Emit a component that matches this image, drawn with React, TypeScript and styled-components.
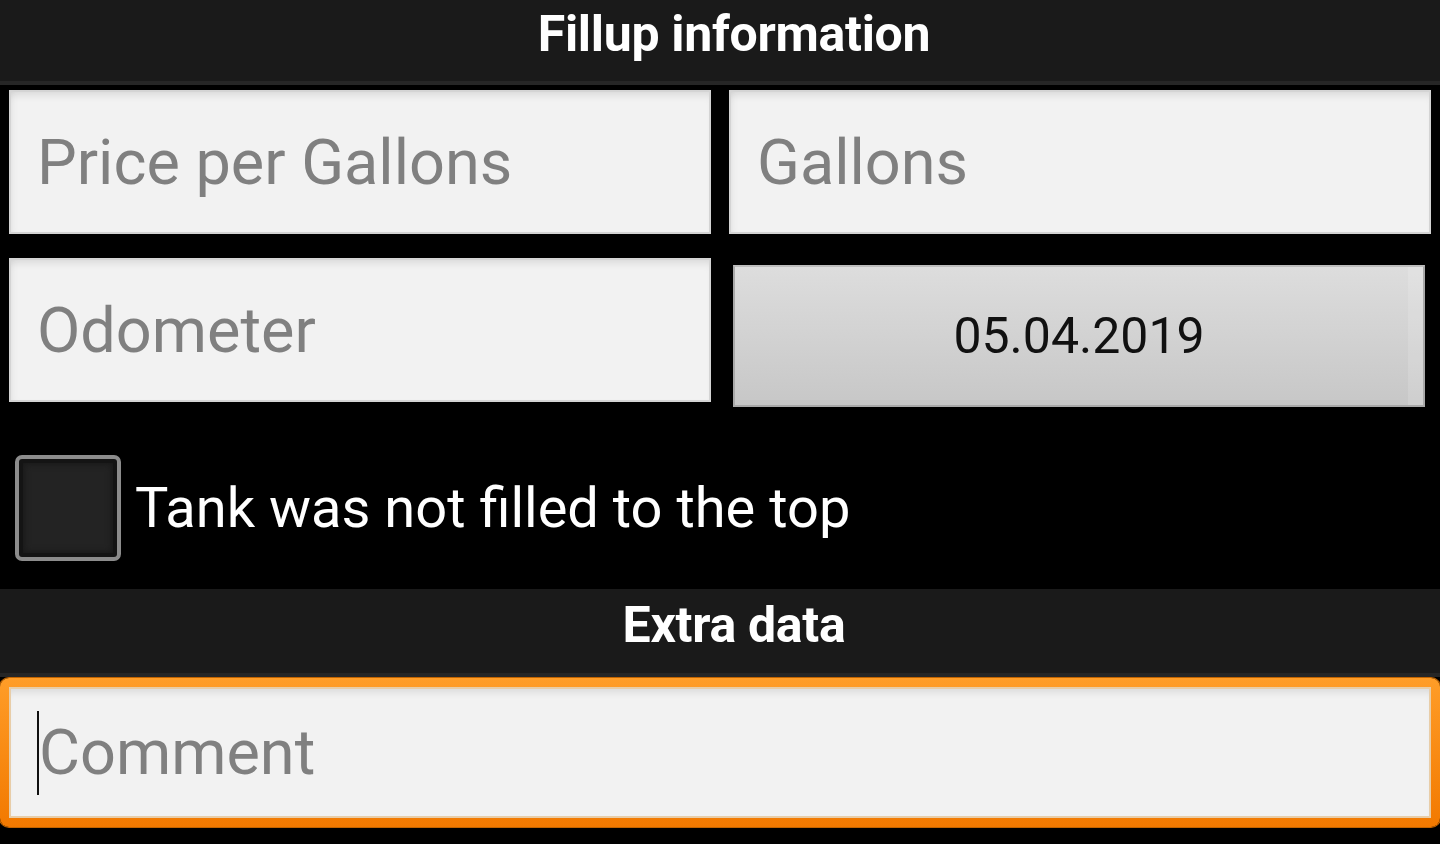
import React from "react";
import styled, { createGlobalStyle } from "styled-components";

const GlobalStyle = createGlobalStyle`
  html, body {
    margin: 0;
    padding: 0;
    background: #000;
  }
  body {
    font-family: Roboto, "Noto Sans", "Liberation Sans", sans-serif;
    width: 1440px;
    height: 844px;
    overflow: hidden;
  }
`;

const Screen = styled.div`
  display: flex;
  flex-direction: column;
  width: 1440px;
  height: 844px;
  background: #000;
`;

const SectionHeader = styled.div<{ $height: number; $lift: number }>`
  box-sizing: border-box;
  display: flex;
  align-items: center;
  justify-content: center;
  height: ${(p) => p.$height}px;
  padding: 0 0 ${(p) => p.$lift}px 28px;
  background: #1a1a1a;
  border-bottom: 4px solid #262626;
  color: #fff;
  font-weight: 700;
  font-size: 50px;
  letter-spacing: -0.3px;
  flex-shrink: 0;
`;

const FieldGrid = styled.div`
  display: grid;
  grid-template-columns: 702px 702px;
  column-gap: 18px;
  row-gap: 24px;
  padding: 5px 9px 0;
`;

const Field = styled.input`
  box-sizing: border-box;
  width: 100%;
  height: 144px;
  margin: 0;
  padding: 0 0 0 26px;
  border: 2px solid #d4d4d4;
  background: #f2f2f2;
  box-shadow: inset 0 8px 10px -6px rgba(0, 0, 0, 0.12),
    inset 6px 0 8px -6px rgba(0, 0, 0, 0.08);
  font-family: Roboto, "Noto Sans", sans-serif;
  font-size: 63px;
  color: #222;
  outline: none;
  &::placeholder {
    color: #808080;
  }
`;

const DateButton = styled.button`
  box-sizing: border-box;
  height: 142px;
  margin: 7px 6px -5px 4px;
  border: 2px solid #a9a9a9;
  border-top-color: #bdbdbd;
  background: linear-gradient(#dddddd, #c7c7c7);
  box-shadow: inset -15px 0 0 rgba(255, 255, 255, 0.14);
  font-family: Roboto, "Noto Sans", sans-serif;
  font-size: 50px;
  color: #111;
  padding: 0;
`;

const CheckRow = styled.label`
  box-sizing: border-box;
  display: flex;
  align-items: center;
  gap: 14px;
  height: 187px;
  padding: 24px 0 0 15px;
  color: #fff;
  font-size: 56px;
  flex-shrink: 0;
`;

const CheckBox = styled.span`
  box-sizing: border-box;
  width: 106px;
  height: 106px;
  border: 4px solid #8c8c8c;
  border-radius: 7px;
  background: #232323;
  box-shadow: inset 0 0 0 4px #141414, inset 0 0 6px 5px #181818;
  flex-shrink: 0;
`;

const CommentFrame = styled.div`
  margin-top: 1px;
  padding: 9px;
  border-radius: 9px;
  background: linear-gradient(#ff9d28, #f27900);
  box-shadow: 0 0 0 1px #c26400;
`;

const CommentBox = styled.div`
  display: flex;
  align-items: center;
  box-sizing: border-box;
  height: 131px;
  padding-left: 26px;
  border: 2px solid #e8cda8;
  background: #f2f2f2;
  box-shadow: inset 0 8px 10px -6px rgba(0, 0, 0, 0.12);
`;

const Caret = styled.span`
  width: 2px;
  height: 84px;
  background: #111;
  flex-shrink: 0;
`;

const CommentInput = styled.input`
  flex: 1;
  min-width: 0;
  border: none;
  background: transparent;
  padding: 0;
  margin: 0;
  font-family: Roboto, "Noto Sans", sans-serif;
  font-size: 63px;
  outline: none;
  &::placeholder {
    color: #808080;
  }
`;

const App = () => {
  return (
    <Screen>
      <GlobalStyle />
      <SectionHeader $height={85} $lift={14}>
        Fillup information
      </SectionHeader>
      <FieldGrid>
        <Field placeholder="Price per Gallons" />
        <Field placeholder="Gallons" />
        <Field placeholder="Odometer" />
        <DateButton>05.04.2019</DateButton>
      </FieldGrid>
      <CheckRow>
        <CheckBox />
        Tank was not filled to the top
      </CheckRow>
      <SectionHeader $height={88} $lift={13}>
        Extra data
      </SectionHeader>
      <CommentFrame>
        <CommentBox>
          <Caret />
          <CommentInput placeholder="Comment" />
        </CommentBox>
      </CommentFrame>
    </Screen>
  );
};

export default App;
